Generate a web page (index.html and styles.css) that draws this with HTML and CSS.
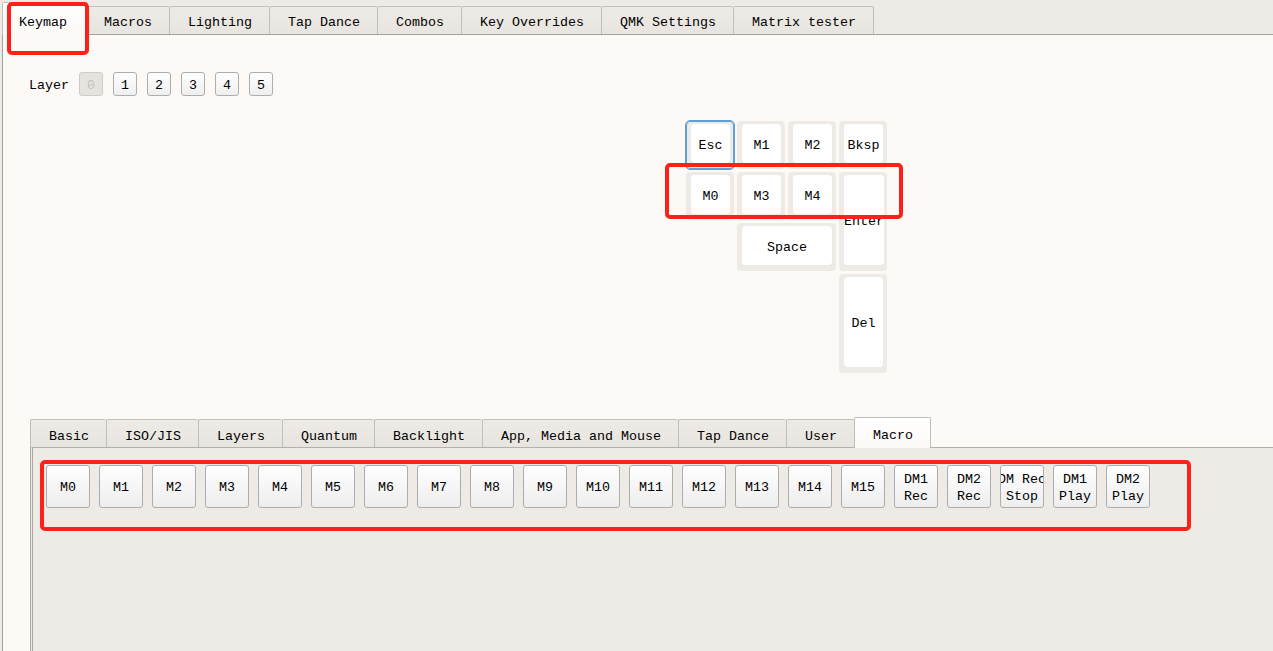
FILE: index.html
```html
<!DOCTYPE html>
<html>
<head>
<meta charset="utf-8">
<title>Vial Keymap</title>
<link rel="stylesheet" href="styles.css">
</head>
<body>
<div class="app">
  <div class="tabbar top-tabs">
    <div class="tab selected">Keymap</div>
    <div class="tab">Macros</div>
    <div class="tab">Lighting</div>
    <div class="tab">Tap Dance</div>
    <div class="tab">Combos</div>
    <div class="tab">Key Overrides</div>
    <div class="tab">QMK Settings</div>
    <div class="tab last">Matrix tester</div>
  </div>
  <div class="panel">
    <div class="layer-row">
      <span class="layer-label">Layer</span>
      <button class="layer-btn disabled">0</button>
      <button class="layer-btn">1</button>
      <button class="layer-btn">2</button>
      <button class="layer-btn">3</button>
      <button class="layer-btn">4</button>
      <button class="layer-btn">5</button>
    </div>
    <div class="keyboard">
      <div class="key active"><div class="cap">Esc</div></div>
      <div class="key"><div class="cap">M1</div></div>
      <div class="key"><div class="cap">M2</div></div>
      <div class="key"><div class="cap">Bksp</div></div>
      <div class="key"><div class="cap">M0</div></div>
      <div class="key"><div class="cap">M3</div></div>
      <div class="key"><div class="cap">M4</div></div>
      <div class="key key-enter"><div class="cap">Enter</div></div>
      <div class="key key-space"><div class="cap">Space</div></div>
      <div class="key key-del"><div class="cap">Del</div></div>
    </div>
    <div class="subtabs">
      <div class="tabbar sub-tabs">
        <div class="stab">Basic</div>
        <div class="stab">ISO/JIS</div>
        <div class="stab">Layers</div>
        <div class="stab">Quantum</div>
        <div class="stab">Backlight</div>
        <div class="stab">App, Media and Mouse</div>
        <div class="stab">Tap Dance</div>
        <div class="stab">User</div>
        <div class="stab selected last">Macro</div>
      </div>
      <div class="pane">
        <div class="macro-row">
          <div class="mbtn"><span>M0</span></div>
          <div class="mbtn"><span>M1</span></div>
          <div class="mbtn"><span>M2</span></div>
          <div class="mbtn"><span>M3</span></div>
          <div class="mbtn"><span>M4</span></div>
          <div class="mbtn"><span>M5</span></div>
          <div class="mbtn"><span>M6</span></div>
          <div class="mbtn"><span>M7</span></div>
          <div class="mbtn"><span>M8</span></div>
          <div class="mbtn"><span>M9</span></div>
          <div class="mbtn"><span>M10</span></div>
          <div class="mbtn"><span>M11</span></div>
          <div class="mbtn"><span>M12</span></div>
          <div class="mbtn"><span>M13</span></div>
          <div class="mbtn"><span>M14</span></div>
          <div class="mbtn"><span>M15</span></div>
          <div class="mbtn"><span>DM1</span><span>Rec</span></div>
          <div class="mbtn"><span>DM2</span><span>Rec</span></div>
          <div class="mbtn"><span>DM Rec</span><span>Stop</span></div>
          <div class="mbtn"><span>DM1</span><span>Play</span></div>
          <div class="mbtn"><span>DM2</span><span>Play</span></div>
        </div>
      </div>
    </div>
  </div>
</div>
<div class="mark mark-tab"></div>
<div class="mark mark-keys"></div>
<div class="mark mark-macros"></div>
</body>
</html>
```

FILE: styles.css
```css
html, body {
  margin: 0;
  padding: 0;
  background: #eeebe7;
}
body {
  position: relative;
  width: 1273px;
  height: 651px;
  overflow: hidden;
  font-family: "Liberation Mono", "DejaVu Sans Mono", monospace;
  font-size: 13.33px;
  color: #000;
}
.app {
  width: 1273px;
  height: 651px;
  overflow: hidden;
}

/* top tab bar */
.tabbar {
  display: flex;
  align-items: flex-end;
  box-sizing: border-box;
}
.top-tabs {
  height: 34px;
  padding-left: 2px;
}
.tab {
  box-sizing: border-box;
  height: 28px;
  padding: 6px 17px 0 18px;
  border: 1px solid #c2beba;
  border-right: none;
  border-bottom: none;
  border-radius: 2px 2px 0 0;
  background: linear-gradient(#eeebe7, #e8e5e1);
  line-height: 20px;
  white-space: pre;
}
.tab.last {
  border-right: 1px solid #c2beba;
}
.tab.selected {
  position: relative;
  z-index: 2;
  height: 33px;
  margin-bottom: -1px;
  margin-right: -3px;
  padding: 10px 20px 0 16px;
  background: linear-gradient(#ffffff, #fcf9f6);
  border-right: 1px solid #c2beba;
}

/* main panel */
.panel {
  position: relative;
  margin-left: 2px;
  width: 1400px;
  height: 620px;
  border-top: 1px solid #a5a19d;
  border-left: 1px solid #a5a19d;
  background: #fcf9f6;
}
.layer-row {
  display: flex;
  align-items: center;
  gap: 10px;
  padding: 37px 0 0 26px;
  height: 24px;
}
.layer-label {
  line-height: 24px;
  padding-top: 3px;
}
.layer-btn {
  box-sizing: border-box;
  width: 24px;
  height: 24px;
  padding: 2px 0 0 0;
  margin: 0;
  font: inherit;
  color: #000;
  border: 1px solid #adadad;
  border-radius: 3px;
  background: linear-gradient(#fefefe, #efefef);
}
.layer-btn.disabled {
  color: #c4c1bd;
  background: #e6e3df;
  border-color: #cfccc8;
}

/* keyboard */
.keyboard {
  display: grid;
  grid-template-columns: repeat(4, 48px);
  grid-template-rows: repeat(5, 48px);
  gap: 3px;
  margin: 25px 0 0 683px;
  width: max-content;
}
.key {
  box-sizing: border-box;
  display: flex;
  padding: 3px 4px 6px 5px;
  border-radius: 4px;
  background: #eeebe7;
}
.key.active {
  outline: 1px solid #5f9fd3;
  outline-offset: 0;
  border: 1px solid #5f9fd3;
  padding: 2px 3px 5px 4px;
}
.cap {
  flex: 1;
  display: flex;
  align-items: center;
  justify-content: center;
  padding-top: 3px;
  background: #fff;
  border-radius: 4px;
}
.key-enter {
  grid-column: 4;
  grid-row: 2 / span 2;
}
.key-space {
  grid-column: 2 / span 2;
  grid-row: 3;
}
.key-del {
  grid-column: 4;
  grid-row: 4 / span 2;
}

/* bottom tab widget */
.subtabs {
  margin: 44px 0 0 27px;
}
.sub-tabs {
  height: 30px;
  padding-left: 0;
}
.stab {
  box-sizing: border-box;
  height: 28px;
  padding: 7px 17px 0 18px;
  border: 1px solid #c2beba;
  border-right: none;
  border-bottom: none;
  border-radius: 2px 2px 0 0;
  background: linear-gradient(#eeebe7, #e8e5e1);
  line-height: 20px;
  white-space: pre;
}
.stab.last {
  border-right: 1px solid #c2beba;
}
.stab.selected {
  position: relative;
  z-index: 2;
  height: 31px;
  margin-bottom: -1px;
  padding-top: 8px;
  background: linear-gradient(#ffffff, #fcf9f6);
}
.pane {
  box-sizing: border-box;
  height: 300px;
  border-top: 1px solid #b4b0ac;
  border-left: 3px double #aaa6a2;
  background: #eeebe7;
  padding: 17px 0 0 13px;
}
.macro-row {
  display: flex;
  gap: 9px;
}
.mbtn {
  box-sizing: border-box;
  flex: none;
  width: 44px;
  height: 43px;
  display: flex;
  flex-direction: column;
  align-items: center;
  justify-content: center;
  overflow: hidden;
  padding-top: 2px;
  border: 1px solid #adadad;
  border-radius: 3px;
  background: linear-gradient(#fefefe, #eeeeee);
  line-height: 17px;
}
.mbtn span {
  white-space: pre;
  flex: none;
}

/* red annotation boxes */
.mark {
  position: absolute;
  box-sizing: border-box;
  border: 4px solid #fe2119;
  border-radius: 5px;
  z-index: 10;
}
.mark-tab {
  left: 7px;
  top: 2px;
  width: 82px;
  height: 53px;
}
.mark-keys {
  left: 665px;
  top: 163px;
  width: 238px;
  height: 56px;
}
.mark-macros {
  left: 40px;
  top: 460px;
  width: 1151px;
  height: 71px;
}
```
